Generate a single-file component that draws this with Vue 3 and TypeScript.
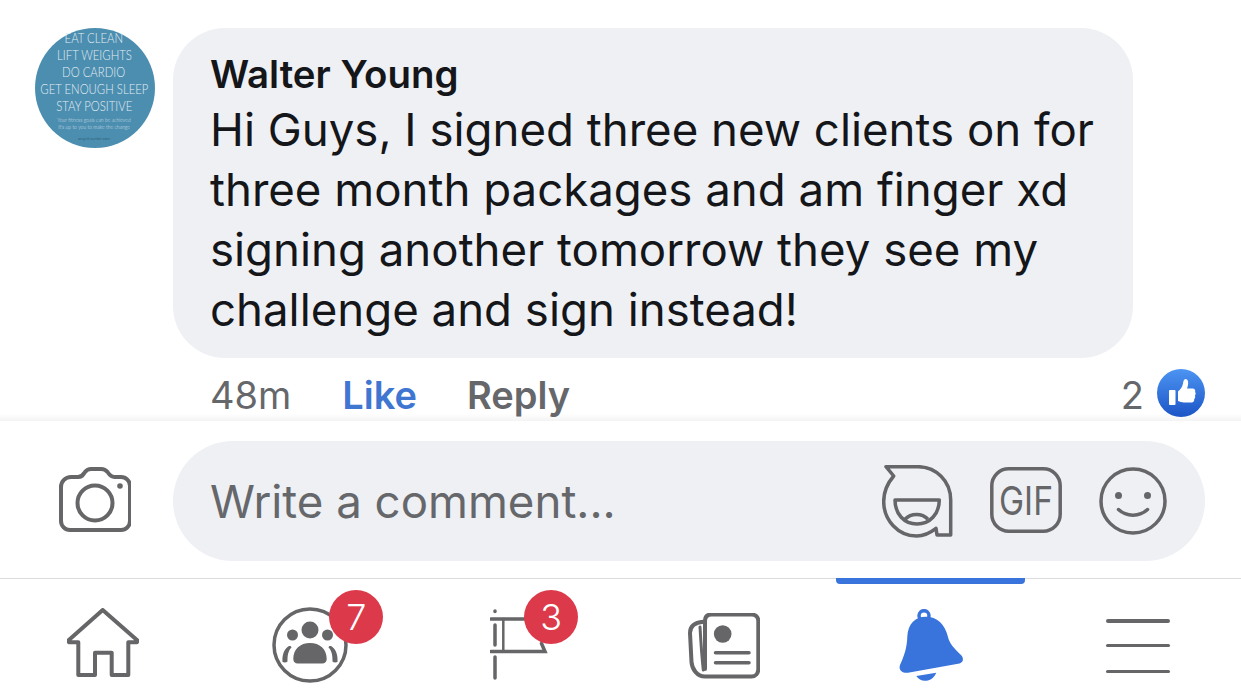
<template>
  <div class="page">
    <section class="comment">
      <div class="avatar">
        <span class="big first">EAT CLEAN</span>
        <span class="big">LIFT WEIGHTS</span>
        <span class="big">DO CARDIO</span>
        <span class="big">GET ENOUGH SLEEP</span>
        <span class="big">STAY POSITIVE</span>
        <span class="tiny">Your fitness goals can be achieved</span>
        <span class="tiny">It's up to you to make the change</span>
        <span class="url">orajnik.tumblr.com</span>
      </div>
      <div class="bubble">
        <div class="name">{{ comment.author }}</div>
        <p class="body">
          <span v-for="line in comment.lines" :key="line" class="line">{{ line }}</span>
        </p>
      </div>
    </section>

    <div class="meta">
      <span class="time">48m</span>
      <span class="like">Like</span>
      <span class="reply">Reply</span>
      <span class="count">2</span>
      <svg class="like-badge" width="48" height="48" viewBox="0 0 48 48">
        <defs>
          <linearGradient id="likeFill" x1="0" y1="0" x2="0" y2="1">
            <stop offset="0" stop-color="#4c94f2" />
            <stop offset="1" stop-color="#1c55c6" />
          </linearGradient>
        </defs>
        <circle cx="24" cy="24" r="24" fill="url(#likeFill)" />
        <rect x="12" y="21" width="6.500" height="15" rx="1" fill="#fff" />
        <path d="M21 22.500c2.500-2 4.500-5 5-8 .3-2 .8-4.500 2.500-4.500 2.400 0 3 3 2.500 6-.2 1.300-.6 2.500-1 3.500h5.500c2.400 0 3.200 2 2.600 3.500.8 1 .8 2.600-.2 3.500.6 1.200.4 2.700-.7 3.500.3 1.800-.7 3.500-2.700 3.500H27c-2.500 0-4-.8-6-1.500z" fill="#fff" />
      </svg>
    </div>

    <section class="composer">
      <svg class="camera" width="72" height="66" viewBox="0 0 72 66" fill="none" stroke="#666669" stroke-width="4">
        <path d="M2 20a10 10 0 0 1 10-10h7c4 0 5-2 7-5 1.500-2 3-3 6-3h10c3 0 5 1 6.500 3 2 3 3.500 5 7 5h6.500a9 9 0 0 1 9 9v35a9 9 0 0 1-9 9H11a9 9 0 0 1-9-9z" />
        <circle cx="36" cy="36" r="17.500" />
        <circle cx="61" cy="19" r="2.800" fill="#666669" stroke="none" />
      </svg>
      <div class="input">
        <span class="placeholder">Write a comment...</span>
        <svg class="sticker" width="72" height="73" viewBox="0 0 72 73" fill="none" stroke="#666669" stroke-width="3.500" stroke-linejoin="round">
          <path d="M4 1.700h32c18 0 32.700 14.500 32.700 33.300V70H55l-1-6.700C48 68 42 71 34.700 71 16 71 1.700 55 1.700 36.500c0-10 4-18.500 10-25.500z" />
          <path d="M13 35h44.300c0 14-9.500 24-22.300 24S13 49 13 35z" />
          <path d="M23 54.300c6-6.500 17-6.500 23 0" />
        </svg>
        <svg class="gif" width="72" height="66" viewBox="0 0 72 66">
          <rect x="1.800" y="1.800" width="68.400" height="62.400" rx="17" fill="none" stroke="#666669" stroke-width="3.500" />
          <text x="36" y="48" text-anchor="middle" textLength="54" lengthAdjust="spacingAndGlyphs" class="gif-text">GIF</text>
        </svg>
        <svg class="smile" width="68" height="68" viewBox="0 0 68 68" fill="none" stroke="#666669" stroke-width="3.500" stroke-linecap="round">
          <circle cx="34" cy="34" r="32" />
          <circle cx="19.500" cy="28.500" r="3.500" fill="#666669" stroke="none" />
          <circle cx="48.500" cy="28.500" r="3.500" fill="#666669" stroke="none" />
          <path d="M19.500 42.500c8 7.500 21 7.500 29 0" />
        </svg>
      </div>
    </section>

    <nav class="tabbar">
      <div class="tab-indicator"></div>

      <div class="tab">
        <svg class="ico-home" width="72" height="70" viewBox="0 0 72 70" fill="none" stroke="#666669" stroke-width="4" stroke-linejoin="round">
          <path d="M35.700 2 70.500 32.500 70 34.300H61.300V67H44.700V44.700H28V67H11.300V34.300H2L1.300 32.500z" />
        </svg>
      </div>

      <div class="tab">
        <div class="ico-wrap ico-groups">
          <svg width="76" height="76" viewBox="-38 -38 76 76" fill="#666669">
            <circle r="36" fill="none" stroke="#666669" stroke-width="3.500" />
            <circle cx="0" cy="-15" r="8.500" />
            <circle cx="-17.500" cy="-10" r="5.500" />
            <circle cx="17.500" cy="-10" r="5.500" />
            <path d="M-16.700 14c0-10 7-16 16.700-16S16.700 4 16.700 14c0 2.800-1.800 4.500-4.500 4.500h-24.400c-2.700 0-4.500-1.700-4.500-4.500z" />
            <path d="M-21 1c-5 3-7 9-6.500 16 2 .7 4 .5 5-.5 0-6 .5-10.500 4-14-.5-1.500-1.200-1.800-2.500-1.500z" />
            <path d="M21 1c5 3 7 9 6.500 16-2 .7-4 .5-5-.5 0-6-.5-10.500-4-14 .5-1.500 1.200-1.800 2.500-1.500z" />
          </svg>
          <span class="badge">7</span>
        </div>
      </div>

      <div class="tab">
        <div class="ico-wrap ico-flag">
          <svg width="60" height="72" viewBox="0 0 60 72" fill="none" stroke="#666669" stroke-width="3.500" stroke-linecap="round">
            <path d="M5 2v.5M5 16v20M5 48v21" />
            <path d="M1 10h46M1 42.500h54l-3.500-8" />
            <path d="M13.300 10v32.500" stroke-width="2.500" />
          </svg>
          <span class="badge">3</span>
        </div>
      </div>

      <div class="tab">
        <svg class="ico-news" width="72" height="66" viewBox="0 0 72 66" fill="none" stroke="#666669" stroke-width="4" stroke-linecap="round" stroke-linejoin="round">
          <path d="M17 56V8c0-4 2-6.500 6.500-6.500h40c4 0 6.800 2.500 6.800 6.500v48c0 4.500-2.800 7.500-6.800 7.500H17C9 63.500 4 56 3.500 49L2 20c0-6 4-10.500 13.300-11.300" />
          <path d="M12 14c.8 14 1.800 30 3.300 43" stroke-width="3" />
          <circle cx="34.700" cy="21" r="8.800" fill="#666669" stroke="none" />
          <path d="M27.500 39.700h33.500M27.500 49.700h33.500" stroke-width="3.500" />
        </svg>
      </div>

      <div class="tab">
        <svg class="ico-bell" width="66" height="73" viewBox="0 0 66 73" fill="#3874dc">
          <circle cx="25" cy="6.700" r="5" fill="none" stroke="#3874dc" stroke-width="3.500" />
          <path d="M8.300 27.700C9 15 16 7.700 26.700 7.700 38 7.700 46 15 49 28c1.500 7 6.500 11.500 13 18 3 3 2.500 7.500-1.500 8.500L9 63.700C3 64.500-1 60.500 1.200 55.500 5 47.500 8 38.500 8.300 27.700z" />
          <path d="M17.300 67l20-3.300c-3 6.500-7.500 8-11.500 8-3.500 0-6.500-1.700-8.500-4.700z" />
        </svg>
      </div>

      <div class="tab">
        <div class="ico-menu">
          <span></span>
          <span></span>
          <span></span>
        </div>
      </div>
    </nav>
  </div>
</template>

<script setup lang="ts">
interface CommentData {
  author: string
  lines: string[]
}

const comment: CommentData = {
  author: 'Walter Young',
  lines: [
    'Hi Guys, I signed three new clients on for',
    'three month packages and am finger xd',
    'signing another tomorrow they see my',
    'challenge and sign instead!'
  ]
}
</script>

<style>
html, body {
  margin: 0;
  background: #fff;
}
</style>

<style scoped>
.page {
  width: 1241px;
  height: 697px;
  overflow: hidden;
  background: #fff;
  display: flex;
  flex-direction: column;
  font-family: Inter, "Liberation Sans", sans-serif;
  color: #14161a;
}

.comment {
  display: flex;
  gap: 18px;
  padding: 28px 0 0 35px;
}

.avatar {
  width: 120px;
  height: 120px;
  box-sizing: border-box;
  padding-right: 2px;
  border-radius: 50%;
  background: #4b8eb0;
  display: flex;
  flex-direction: column;
  align-items: center;
  flex-shrink: 0;
  color: #e4edf2;
  font-family: Lato, sans-serif;
  font-weight: 300;
  white-space: nowrap;
}

.big {
  font-size: 13.500px;
  line-height: 17px;
  transform: scaleX(0.84);
}

.big.first {
  margin-top: 2px;
}

.tiny {
  font-size: 5px;
  line-height: 6.500px;
  opacity: 0.85;
}

.big + .tiny {
  margin-top: 2px;
}

.url {
  font-size: 4px;
  line-height: 6px;
  margin-top: 6px;
  color: #234a5e;
}

.bubble {
  width: 960px;
  height: 330px;
  box-sizing: border-box;
  padding: 23px 38px 0;
  border-radius: 52px;
  background: #eef0f4;
}

.name {
  font-size: 38.400px;
  font-weight: 600;
  line-height: 46px;
  margin-left: -1px;
}

.body {
  margin: 3px 0 0 -1px;
  font-size: 45.600px;
  line-height: 60px;
  white-space: nowrap;
}

.line {
  display: block;
}

.meta {
  height: 63px;
  box-sizing: border-box;
  padding: 11px 36px 0 210px;
  display: flex;
  align-items: center;
  font-size: 38px;
  color: #65676b;
  background: linear-gradient(to bottom, #fff 88%, #f4f4f5 100%);
}

.like {
  margin-left: 51px;
  font-weight: 600;
  color: #3f76d2;
}

.reply {
  margin-left: 50px;
  font-weight: 600;
}

.count {
  margin-left: auto;
  margin-right: 13px;
}

.like-badge {
  margin-top: -5px;
}

.composer {
  height: 157px;
  box-sizing: border-box;
  padding: 20px 36px 0 59px;
  display: flex;
  align-items: flex-start;
}

.camera {
  margin-top: 26px;
  flex-shrink: 0;
}

.input {
  margin-left: 42px;
  flex: 1;
  height: 120px;
  border-radius: 60px;
  background: #eef0f4;
  display: flex;
  align-items: center;
  padding: 0 38px 0 37px;
}

.placeholder {
  font-size: 45.600px;
  color: #65676b;
  margin-right: auto;
}

.gif {
  margin-left: 36px;
  margin-top: -2px;
}

.gif-text {
  font-size: 40px;
  font-weight: 400;
  fill: #666669;
}

.smile {
  margin-left: 37px;
  margin-top: -1px;
}

.tabbar {
  position: relative;
  flex: 1;
  border-top: 1px solid #dcdcde;
  display: grid;
  grid-template-columns: repeat(6, 1fr);
}

.tab-indicator {
  position: absolute;
  left: 836px;
  top: -1px;
  width: 189px;
  height: 6px;
  background: #3874dc;
  border-radius: 0 0 4px 4px;
}

.tab {
  display: flex;
  justify-content: center;
  align-items: flex-start;
}

.ico-home {
  margin-top: 29px;
}

.ico-wrap {
  position: relative;
}

.ico-groups {
  margin-top: 28px;
}

.ico-flag {
  width: 60px;
  height: 72px;
  margin-top: 30px;
  margin-left: 6px;
}

.badge {
  position: absolute;
  width: 54px;
  height: 54px;
  border-radius: 50%;
  background: #dc3a4a;
  color: #fff;
  font-size: 36px;
  font-weight: 300;
  line-height: 54px;
  text-align: center;
}

.ico-groups .badge {
  left: 57px;
  top: -17px;
}

.ico-flag .badge {
  left: 34px;
  top: -19px;
}

.ico-news {
  margin-top: 34px;
}

.ico-bell {
  margin-top: 30px;
  margin-left: 3px;
}

.ico-menu {
  width: 64px;
  margin-top: 40px;
  display: flex;
  flex-direction: column;
}

.ico-menu span {
  height: 3.500px;
  border-radius: 2px;
  background: #666669;
}

.ico-menu span + span {
  margin-top: 21px;
}

.ico-menu span:last-child {
  margin-top: 22.500px;
}
</style>
